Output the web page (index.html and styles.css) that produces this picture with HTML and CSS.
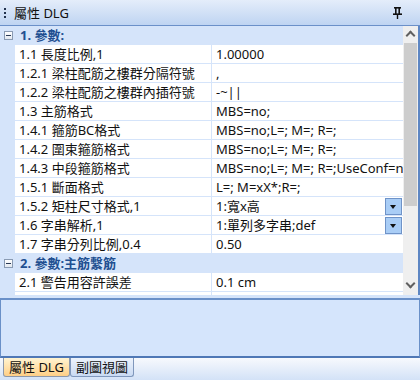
FILE: index.html
```html
<!DOCTYPE html>
<html lang="zh-Hant">
<head>
    <meta charset="UTF-8">
    <title>屬性 DLG</title>
    <link rel="stylesheet" href="styles.css">
</head>
<body>

    <div class="panel">
        <div class="titlebar">
            <span class="grip"><i></i><i></i><i></i></span>
            <span class="title">屬性 DLG</span>
            <svg class="pin" width="9" height="12" viewBox="0 0 9 12">
                <rect x="1" y="0" width="7" height="1.6" fill="#111"/>
                <rect x="2" y="1" width="1.6" height="6" fill="#111"/>
                <rect x="5.4" y="1" width="1.6" height="6" fill="#111"/>
                <rect x="0" y="6.4" width="9" height="1.6" fill="#111"/>
                <rect x="3.8" y="7" width="1.4" height="5" fill="#111"/>
            </svg>
        </div>

        <div class="grid-wrap">
            <div class="grid">
                <div class="cat"><span class="toggle"></span>1. 參數:</div>
                <div class="row"><span class="name">1.1 長度比例,1</span><span class="value">1.00000</span></div>
                <div class="row"><span class="name">1.2.1 梁柱配筋之樓群分隔符號</span><span class="value">,</span></div>
                <div class="row"><span class="name">1.2.2 梁柱配筋之樓群內插符號</span><span class="value">-~||</span></div>
                <div class="row"><span class="name">1.3 主筋格式</span><span class="value">MBS=no;</span></div>
                <div class="row"><span class="name">1.4.1 箍筋BC格式</span><span class="value">MBS=no;L=; M=; R=;</span></div>
                <div class="row"><span class="name">1.4.2 圍束箍筋格式</span><span class="value">MBS=no;L=; M=; R=;</span></div>
                <div class="row"><span class="name">1.4.3 中段箍筋格式</span><span class="value">MBS=no;L=; M=; R=;UseConf=no</span></div>
                <div class="row"><span class="name">1.5.1 斷面格式</span><span class="value">L=; M=xX*;R=;</span></div>
                <div class="row"><span class="name">1.5.2 矩柱尺寸格式,1</span><span class="value combo">1:寬x高<span class="drop"></span></span></div>
                <div class="row"><span class="name">1.6 字串解析,1</span><span class="value combo">1:單列多字串;def<span class="drop"></span></span></div>
                <div class="row"><span class="name">1.7 字串分列比例,0.4</span><span class="value">0.50</span></div>
                <div class="cat"><span class="toggle"></span>2. 參數:主筋繫筋</div>
                <div class="row"><span class="name">2.1 警告用容許誤差</span><span class="value">0.1 cm</span></div>
                <div class="row"><span class="name">2.2 警告用容許筋數</span><span class="value">1</span></div>
            </div>
            <div class="scrollbar">
                <div class="arrow up"></div>
                <div class="thumb"></div>
                <div class="track"></div>
                <div class="arrow down"></div>
            </div>
        </div>

        <div class="lower">
            <div class="desc"></div>
        </div>

        <div class="tabs">
            <span class="tab active">屬性 DLG</span>
            <span class="tab">副圖視圖</span>
        </div>
    </div>

</body>
</html>
```

FILE: styles.css
```css
body {
    margin: 0;
    font-family: "Noto Sans", "Noto Sans CJK TC", sans-serif;
    font-size: 13px;
    color: #111;
    background-color: #ffffff;
}

.panel {
    width: 420px;
    height: 380px;
    display: flex;
    flex-direction: column;
    background-color: #d5e4fa;
    overflow: hidden;
}

/* title bar */
.titlebar {
    height: 25px;
    flex: none;
    display: flex;
    align-items: center;
    background: linear-gradient(#e4edfa, #bfd4f2);
    border-bottom: 1px solid #6b90c9;
    padding-left: 4px;
}

.grip {
    display: flex;
    flex-direction: column;
    gap: 2px;
    width: 8px;
}

.grip i {
    width: 2px;
    height: 2px;
    background-color: #22324d;
}

.title {
    line-height: 18px;
    padding-left: 2px;
}

.pin {
    margin-left: auto;
    margin-right: 18px;
}

/* property grid */
.grid-wrap {
    height: 269px;
    flex: none;
    display: flex;
    border-right: 2px solid #5d86c3;
}

.grid {
    flex: 1;
    overflow: hidden;
    background-color: #d5e4fa;
}

.cat {
    height: 18px;
    line-height: 18px;
    border-bottom: 1px solid #d5e4fa;
    display: flex;
    align-items: center;
    font-weight: bold;
    color: #214f91;
}

.toggle {
    width: 7px;
    height: 7px;
    margin: 0 7px 0 4px;
    border: 1px solid #8a9bb3;
    background: linear-gradient(#ffffff, #e2e8f0);
    position: relative;
}

.toggle::after {
    content: "";
    position: absolute;
    left: 1px;
    top: 3px;
    width: 5px;
    height: 1px;
    background-color: #2a3a55;
}

.row {
    height: 18px;
    line-height: 18px;
    margin-left: 15px;
    display: flex;
    border-bottom: 1px solid #d5e4fa;
    background-color: #ffffff;
}

.name {
    width: 192px;
    padding-left: 4px;
    flex: none;
    border-right: 1px solid #d5e4fa;
    white-space: nowrap;
    overflow: hidden;
}

.value {
    flex: 1;
    padding-left: 4px;
    white-space: nowrap;
    overflow: hidden;
}

.combo {
    display: flex;
    align-items: center;
}

.drop {
    margin-left: auto;
    width: 15px;
    height: 15px;
    margin-right: 1px;
    border: 1px solid #6f93c8;
    background-color: #a9cdf6;
    position: relative;
}

.drop::after {
    content: "";
    position: absolute;
    left: 4px;
    top: 6px;
    border-left: 3.5px solid transparent;
    border-right: 3.5px solid transparent;
    border-top: 4px solid #111;
}

/* scrollbar */
.scrollbar {
    width: 15px;
    flex: none;
    display: flex;
    flex-direction: column;
    background-color: #efefef;
}

.arrow {
    height: 17px;
    flex: none;
    position: relative;
}

.arrow::after {
    content: "";
    position: absolute;
    left: 4px;
    width: 5px;
    height: 5px;
    border-left: 2px solid #606060;
    border-top: 2px solid #606060;
}

.up::after {
    top: 6px;
    transform: rotate(45deg);
}

.down::after {
    top: 2px;
    transform: rotate(225deg);
}

.thumb {
    height: 163px;
    margin: 0 1px;
    background-color: #cdcdcd;
}

.track {
    flex: 1;
}

/* description area */
.lower {
    flex: 1;
    padding-top: 3px;
    display: flex;
}

.desc {
    flex: 1;
    border: 1px solid #6a90c8;
    border-top-width: 2px;
    border-bottom: 2px solid #4f78b6;
    background-color: #d5e5fc;
}

/* tabs */
.tabs {
    height: 22px;
    flex: none;
    display: flex;
    align-items: flex-start;
    padding-left: 3px;
    background: linear-gradient(#f7f9fd, #d3e2f7);
}

.tab {
    height: 18px;
    line-height: 18px;
    padding: 0 5px;
    border: 1px solid #7f97bc;
    border-top: none;
    border-radius: 0 0 3px 3px;
    background: linear-gradient(#edf3fc, #c9daf3);
}

.tab.active {
    background: linear-gradient(#fff4d2, #ffcf86);
    border-color: #8c98ab;
}
```
